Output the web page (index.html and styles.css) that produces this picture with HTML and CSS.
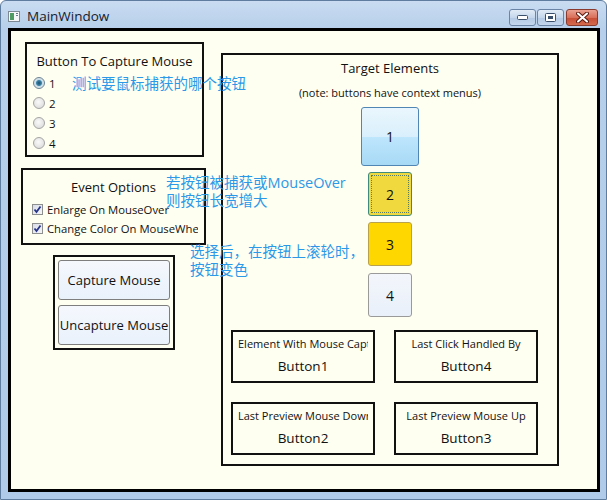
FILE: index.html
```html
<!DOCTYPE html>
<html lang="en">
<head>
    <meta charset="UTF-8">
    <title>MainWindow</title>
    <link rel="stylesheet" href="styles.css">
</head>
<body>
    <div class="window">
        <div class="titlebar">
            <svg class="app-icon" width="12" height="11" viewBox="0 0 12 11">
                <rect x="0.5" y="0.5" width="11" height="10" fill="#f4f6f8" stroke="#7d8a96"/>
                <rect x="2" y="2" width="4" height="7" fill="#4f9a63"/>
                <rect x="8" y="2" width="2" height="1" fill="#6a7a8a"/>
                <rect x="8" y="4" width="2" height="1" fill="#6a7a8a"/>
            </svg>
            <span class="title">MainWindow</span>
            <div class="controls">
                <div class="ctl">
                    <svg width="11" height="5" viewBox="0 0 11 5"><rect x="0.5" y="0.5" width="10" height="4" rx="1" fill="#fff" stroke="#3a4f6a"/></svg>
                </div>
                <div class="ctl">
                    <svg width="11" height="9" viewBox="0 0 11 9"><rect x="0.5" y="0.5" width="10" height="8" rx="1" fill="#fff" stroke="#3a4f6a"/><rect x="3" y="3" width="5" height="3" fill="#3a4f6a"/></svg>
                </div>
                <div class="ctl close">
                    <svg width="13" height="11" viewBox="0 0 13 11"><path d="M2 1.5 L11 9.5 M11 1.5 L2 9.5" stroke="#5a1a10" stroke-width="4" stroke-linecap="round"/><path d="M2 1.5 L11 9.5 M11 1.5 L2 9.5" stroke="#fff" stroke-width="2" stroke-linecap="round"/></svg>
                </div>
            </div>
        </div>

        <div class="client">
            <div class="left-col">
                <div class="box capture-box">
                    <div class="box-title">Button To Capture Mouse</div>
                    <div class="radio-row"><span class="radio checked"></span>1</div>
                    <div class="radio-row"><span class="radio"></span>2</div>
                    <div class="radio-row"><span class="radio"></span>3</div>
                    <div class="radio-row"><span class="radio"></span>4</div>
                </div>

                <div class="box options-box">
                    <div class="box-title">Event Options</div>
                    <div class="check-row">
                        <span class="check"><svg width="9" height="9" viewBox="0 0 9 9"><path d="M1.5 4.5 L3.5 7 L7.5 1.5" stroke="#26358a" stroke-width="1.8" fill="none"/></svg></span>
                        Enlarge On MouseOver
                    </div>
                    <div class="check-row">
                        <span class="check"><svg width="9" height="9" viewBox="0 0 9 9"><path d="M1.5 4.5 L3.5 7 L7.5 1.5" stroke="#26358a" stroke-width="1.8" fill="none"/></svg></span>
                        Change Color On MouseWheel
                    </div>
                </div>

                <div class="box buttons-box">
                    <div class="push">Capture Mouse</div>
                    <div class="push">Uncapture Mouse</div>
                </div>
            </div>

            <div class="box target-box">
                <div class="target-title">Target Elements</div>
                <div class="target-note">(note: buttons have context menus)</div>
                <div class="target-buttons">
                    <div class="tbtn tbtn-big">1</div>
                    <div class="tbtn tbtn-focus"><span class="focus-ring">2</span></div>
                    <div class="tbtn tbtn-gold">3</div>
                    <div class="tbtn">4</div>
                </div>
                <div class="info-grid">
                    <div class="info">
                        <div class="info-label">Element With Mouse Capture</div>
                        <div class="info-value">Button1</div>
                    </div>
                    <div class="info">
                        <div class="info-label">Last Click Handled By</div>
                        <div class="info-value">Button4</div>
                    </div>
                    <div class="info">
                        <div class="info-label">Last Preview Mouse Down</div>
                        <div class="info-value">Button2</div>
                    </div>
                    <div class="info">
                        <div class="info-label">Last Preview Mouse Up</div>
                        <div class="info-value">Button3</div>
                    </div>
                </div>
            </div>

            <!-- annotations drawn over the window -->
            <div class="note note-capture">测试要鼠标捕获的哪个按钮</div>
            <div class="note note-enlarge">若按钮被捕获或MouseOver<br>则按钮长宽增大</div>
            <div class="note note-wheel">选择后，在按钮上滚轮时，<br>按钮变色</div>
        </div>
    </div>
</body>
</html>
```

FILE: styles.css
```css
body {
    margin: 0;
    font-family: "Open Sans", "Noto Sans CJK SC", sans-serif;
    background-color: #fff;
    color: #111;
}

.window {
    width: 607px;
    height: 500px;
    box-sizing: border-box;
    display: flex;
    flex-direction: column;
    padding: 0 6px 7px 7px;
    border: 1px solid #5f7d9e;
    border-radius: 6px 6px 0 0;
    background: linear-gradient(#c9dcf1, #b7cfea 28px, #afcbe9);
}

.titlebar {
    height: 27px;
    display: flex;
    align-items: center;
    flex-shrink: 0;
}

.app-icon {
    margin-top: 3px;
}

.title {
    margin-left: 7px;
    margin-top: 2px;
    font-size: 13.5px;
    color: #15202e;
}

.controls {
    margin-left: auto;
    margin-right: 2px;
    align-self: flex-start;
    margin-top: 8px;
    display: flex;
    gap: 1px;
}

.ctl {
    width: 27px;
    height: 17px;
    box-sizing: border-box;
    border: 1px solid #6a84a6;
    border-radius: 3px;
    background: linear-gradient(#e1ebf6, #c6d7ec 50%, #b3c9e3 51%, #c3d6ed);
    display: flex;
    align-items: center;
    justify-content: center;
}

.ctl.close {
    width: 32px;
    margin-left: 1px;
    border-color: #8a3a2c;
    background: linear-gradient(#eba190, #d8705a 50%, #c74d34 51%, #d36a4e);
}

.client {
    flex: 1;
    position: relative;
    display: flex;
    align-items: flex-start;
    border: 3px solid #000;
    background-color: #fffff1;
}

.left-col {
    width: 200px;
    flex-shrink: 0;
}

.box {
    box-sizing: border-box;
    border: 2px solid #111;
    overflow: hidden;
    white-space: nowrap;
}

.box-title {
    text-align: center;
    font-size: 13px;
    line-height: 18px;
}

.capture-box {
    width: 179px;
    height: 115px;
    margin: 11px 0 0 14px;
    padding: 8px 0 0 6px;
}

.capture-box .box-title {
    margin: 0 0 3px -6px;
}

.radio-row {
    height: 20px;
    display: flex;
    align-items: center;
    gap: 4px;
    font-size: 11.5px;
}

.radio {
    width: 12px;
    height: 12px;
    box-sizing: border-box;
    border-radius: 50%;
    border: 1px solid #a4a4a4;
    background: radial-gradient(circle at 45% 40%, #fafafa, #d6d6d6);
}

.radio.checked {
    border-color: #6b8293;
    background: radial-gradient(circle, #1d4f6c 0, #3b83a8 2.5px, #c6dbe6 3.5px, #ececec 6px);
}

.options-box {
    width: 185px;
    height: 77px;
    margin: 11px 0 0 10px;
    padding: 8px 6px 0 9px;
}

.options-box .box-title {
    margin: 0 -6px 4px -9px;
}

.check-row {
    height: 19px;
    display: flex;
    align-items: center;
    gap: 4px;
    font-size: 11.3px;
    overflow: hidden;
}

.check {
    width: 11px;
    height: 11px;
    flex-shrink: 0;
    box-sizing: border-box;
    border: 1px solid #8e8f8f;
    background: linear-gradient(135deg, #d9dde8, #f6f6f6);
    display: flex;
    align-items: center;
    justify-content: center;
}

.buttons-box {
    width: 122px;
    height: 95px;
    margin: 10px 0 0 42px;
    padding: 3px;
    display: flex;
    flex-direction: column;
    gap: 5px;
}

.push {
    height: 40px;
    box-sizing: border-box;
    border: 1px solid #7e7e7e;
    border-radius: 3px;
    background: linear-gradient(#f5f8fd, #e9f1fb);
    display: flex;
    align-items: center;
    justify-content: center;
    font-size: 13px;
}

.target-box {
    width: 338px;
    height: 413px;
    margin: 22px 0 0 10px;
    padding: 3px 0 0 8px;
}

.target-title {
    text-align: center;
    font-size: 13px;
    line-height: 20px;
    margin-left: -8px;
}

.target-note {
    text-align: center;
    font-size: 11px;
    line-height: 16px;
    margin: 7px 0 0 -8px;
}

.target-buttons {
    display: flex;
    flex-direction: column;
    align-items: center;
    margin: 6px 0 0 -8px;
}

.tbtn {
    width: 44px;
    height: 44px;
    margin-top: 6px;
    box-sizing: border-box;
    border: 1px solid #9a9a9a;
    border-radius: 3px;
    background: linear-gradient(#f3f6fb, #e9f0fa);
    display: flex;
    align-items: center;
    justify-content: center;
    font-size: 14px;
}

.tbtn:last-child {
    margin-top: 7px;
}

.tbtn-big {
    width: 58px;
    height: 59px;
    margin-top: 0;
    border-color: #4f86b3;
    background: linear-gradient(#eaf6fd, #d9f0fc 50%, #bee6fd 51%, #a7d9f5);
}

.tbtn-focus {
    border-color: #3d8a7e;
    background: #efd93e;
    padding: 2px;
}

.focus-ring {
    width: 100%;
    height: 100%;
    box-sizing: border-box;
    border: 1px dotted #5c7b5c;
    display: flex;
    align-items: center;
    justify-content: center;
}

.tbtn-gold {
    border-color: #b9a24e;
    background: #ffd700;
}

.info-grid {
    display: grid;
    grid-template-columns: 144px 144px;
    grid-auto-rows: 53px;
    column-gap: 19px;
    row-gap: 19px;
    margin-top: 13px;
}

.info {
    border: 2px solid #111;
    overflow: hidden;
    white-space: nowrap;
    padding: 4px 5px 0;
}

.info-label {
    text-align: center;
    font-size: 11px;
    line-height: 16px;
    overflow: hidden;
}

.info-value {
    text-align: center;
    font-size: 13.5px;
    line-height: 20px;
    margin-top: 4px;
}

.note {
    position: absolute;
    color: #2b98e8;
    font-size: 14.5px;
    line-height: 18px;
    white-space: nowrap;
}

.note-capture {
    left: 61px;
    top: 44px;
}

.note-enlarge {
    left: 155px;
    top: 143px;
}

.note-wheel {
    left: 179px;
    top: 212px;
}
```
